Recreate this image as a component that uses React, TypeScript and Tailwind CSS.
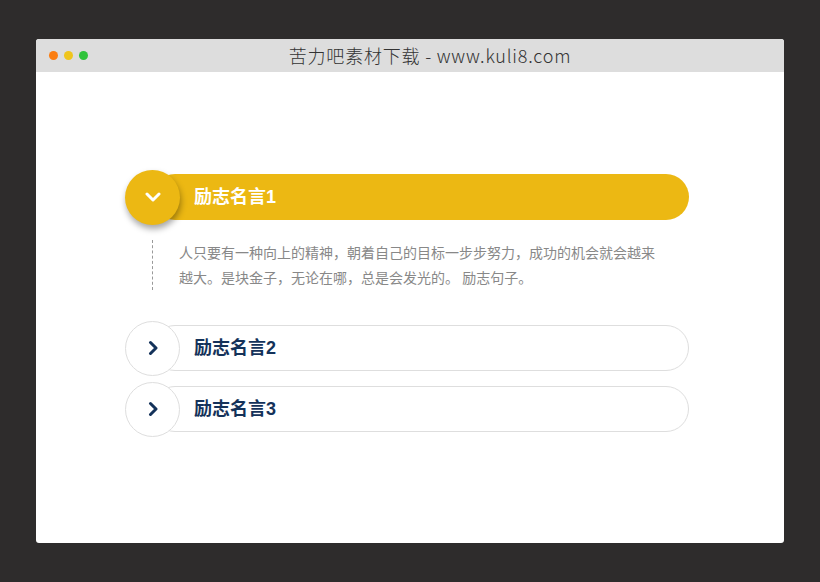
import React, { useState } from 'react'

const items = [
  {
    title: '励志名言1',
    body: '人只要有一种向上的精神，朝着自己的目标一步步努力，成功的机会就会越来越大。是块金子，无论在哪，总是会发光的。 励志句子。',
  },
  { title: '励志名言2', body: '' },
  { title: '励志名言3', body: '' },
]

const ChevronDown = () => (
  <svg width="16" height="10" viewBox="0 0 16 10" fill="none">
    <path d="M2 2l6 6 6-6" stroke="#fff" strokeWidth="3" strokeLinecap="round" strokeLinejoin="round" />
  </svg>
)

const ChevronRight = () => (
  <svg width="10" height="16" viewBox="0 0 10 16" fill="none">
    <path d="M2.5 2.5l5.5 5.5-5.5 5.5" stroke="#14325a" strokeWidth="3" strokeLinecap="round" strokeLinejoin="round" />
  </svg>
)

const App = () => {
  const [open, setOpen] = useState(0)
  return (
    <div className="h-[582px] w-[820px] bg-[#2e2c2c] pl-[36px] pt-[39px]">
      <div className="h-[504px] w-[748px] overflow-hidden rounded-[3px] bg-white">
        <div className="flex h-[33px] items-center gap-[6px] bg-[#dddddd] pl-[13px]">
          <span className="h-[9px] w-[9px] rounded-full bg-[#fb7d10]" />
          <span className="h-[9px] w-[9px] rounded-full bg-[#efc51d]" />
          <span className="h-[9px] w-[9px] rounded-full bg-[#30c33b]" />
          <div className="flex-1 pr-[18px] text-center text-[18px] font-light tracking-[0.8px] text-[#333] [font-family:'Noto_Sans_CJK_SC',sans-serif]">
            苦力吧素材下载 - www.kuli8.com
          </div>
        </div>
        <div className="ml-[89px] w-[564px] pt-[98px] [font-family:'Liberation_Sans','Noto_Sans_CJK_SC',sans-serif]">
          {items.map((item, i) => {
            const active = open === i
            return (
              <div key={item.title} className="mb-[7px]">
                <button
                  className="flex h-[54px] w-full items-center focus:outline-none"
                  onClick={() => setOpen(active ? -1 : i)}
                >
                  <span
                    className={
                      active
                        ? 'relative z-10 flex h-[55px] w-[55px] shrink-0 items-center justify-center rounded-full bg-[#ecb813] shadow-[1px_4px_6px_rgba(0,0,0,0.35)]'
                        : 'relative z-10 flex h-[55px] w-[55px] shrink-0 items-center justify-center rounded-full border border-[#dedede] bg-white'
                    }
                  >
                    {active ? <ChevronDown /> : <ChevronRight />}
                  </span>
                  <span
                    className={
                      active
                        ? '-ml-[28px] flex h-[46px] flex-1 items-center rounded-full bg-[#ecb813] pl-[42px] text-[18px] font-bold text-white'
                        : '-ml-[28px] flex h-[46px] flex-1 items-center rounded-full border border-[#dedede] bg-white pl-[41px] text-[18px] font-bold text-[#14325a]'
                    }
                  >
                    {item.title}
                  </span>
                </button>
                {active && item.body ? (
                  <div className="mb-[31px] ml-[27px] mt-[16px] border-l border-dashed border-[#999] pl-[26px]">
                    <p className="w-[482px] text-[14px] leading-[25px] text-[#888] [font-family:'Noto_Sans_CJK_SC',sans-serif]">
                      {item.body}
                    </p>
                  </div>
                ) : null}
              </div>
            )
          })}
        </div>
      </div>
    </div>
  )
}

export default App
